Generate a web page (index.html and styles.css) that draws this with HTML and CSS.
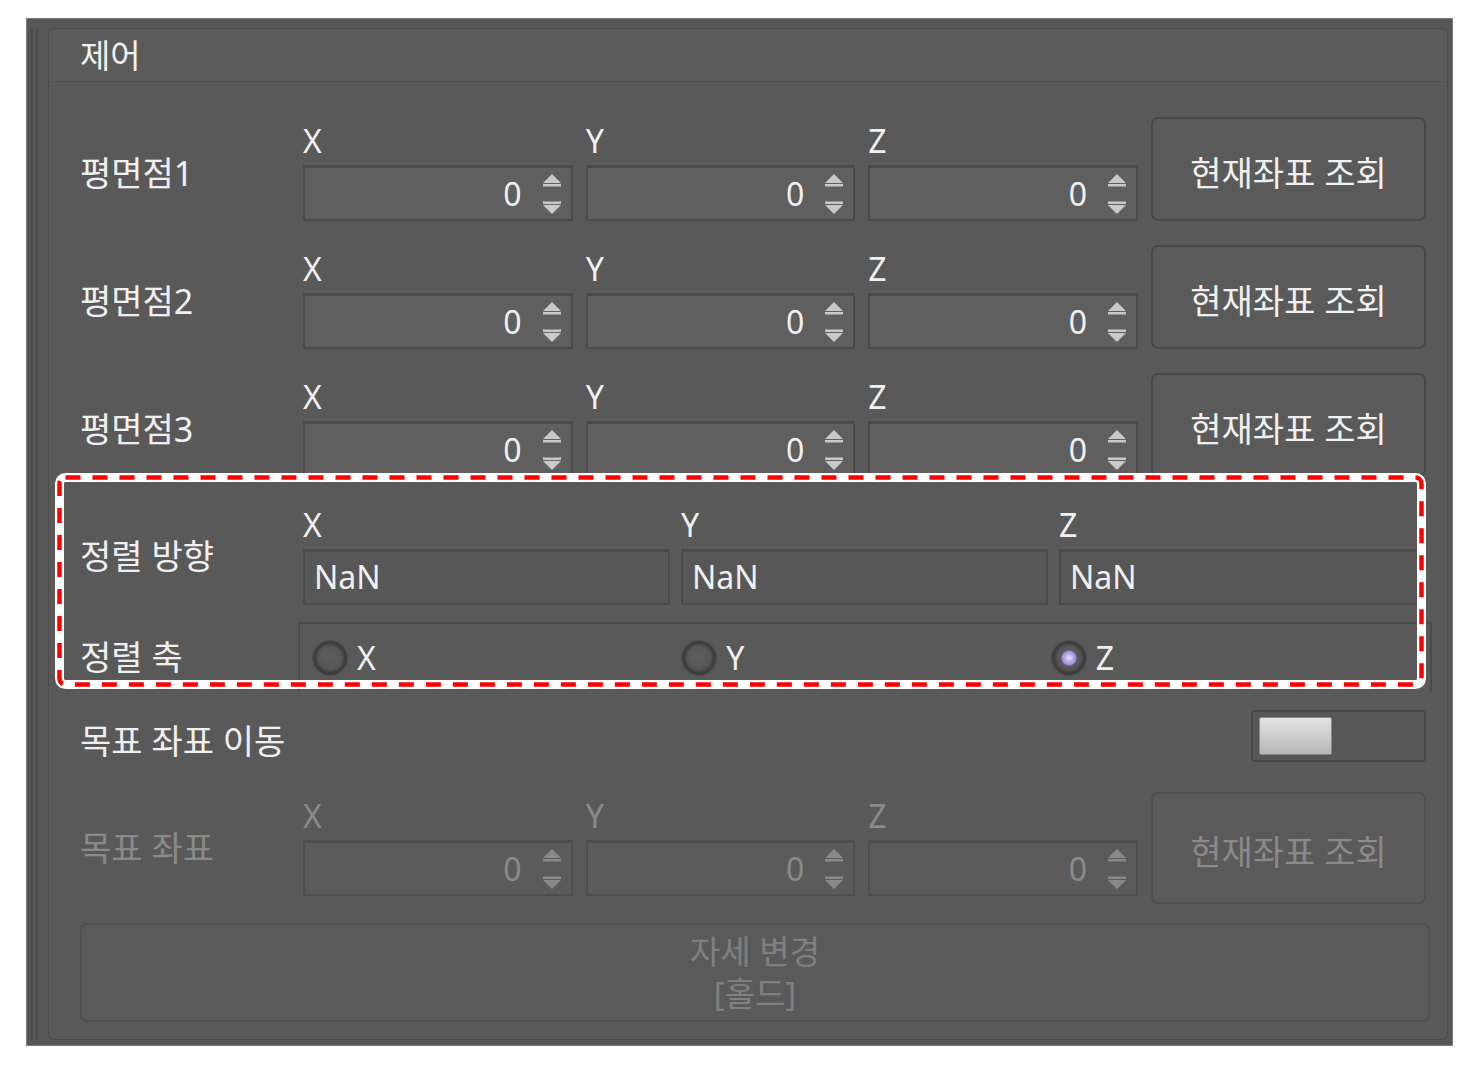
FILE: index.html
```html
<!DOCTYPE html>
<html lang="ko">
<head>
  <meta charset="utf-8">
  <title>제어</title>
  <link rel="stylesheet" href="styles.css">
</head>
<body>
  <div class="window">
    <div class="rail"></div>
    <section class="group">
      <header class="group-head">제어</header>
      <div class="group-body">

        <div class="point-row">
          <span class="row-label">평면점1</span>
          <span class="axis">X</span>
          <span class="axis">Y</span>
          <span class="axis">Z</span>
          <button class="btn">현재좌표 조회</button>
          <div class="spin"><span>0</span><svg class="arrows" viewBox="0 0 18 40"><path d="M9 0L18 9H0Z M0 10h18v2.5H0Z M0 27.5h18V30H0Z M0 31h18L9 40Z"/></svg></div>
          <div class="spin"><span>0</span><svg class="arrows" viewBox="0 0 18 40"><path d="M9 0L18 9H0Z M0 10h18v2.5H0Z M0 27.5h18V30H0Z M0 31h18L9 40Z"/></svg></div>
          <div class="spin"><span>0</span><svg class="arrows" viewBox="0 0 18 40"><path d="M9 0L18 9H0Z M0 10h18v2.5H0Z M0 27.5h18V30H0Z M0 31h18L9 40Z"/></svg></div>
        </div>

        <div class="point-row">
          <span class="row-label">평면점2</span>
          <span class="axis">X</span>
          <span class="axis">Y</span>
          <span class="axis">Z</span>
          <button class="btn">현재좌표 조회</button>
          <div class="spin"><span>0</span><svg class="arrows" viewBox="0 0 18 40"><path d="M9 0L18 9H0Z M0 10h18v2.5H0Z M0 27.5h18V30H0Z M0 31h18L9 40Z"/></svg></div>
          <div class="spin"><span>0</span><svg class="arrows" viewBox="0 0 18 40"><path d="M9 0L18 9H0Z M0 10h18v2.5H0Z M0 27.5h18V30H0Z M0 31h18L9 40Z"/></svg></div>
          <div class="spin"><span>0</span><svg class="arrows" viewBox="0 0 18 40"><path d="M9 0L18 9H0Z M0 10h18v2.5H0Z M0 27.5h18V30H0Z M0 31h18L9 40Z"/></svg></div>
        </div>

        <div class="point-row">
          <span class="row-label">평면점3</span>
          <span class="axis">X</span>
          <span class="axis">Y</span>
          <span class="axis">Z</span>
          <button class="btn">현재좌표 조회</button>
          <div class="spin"><span>0</span><svg class="arrows" viewBox="0 0 18 40"><path d="M9 0L18 9H0Z M0 10h18v2.5H0Z M0 27.5h18V30H0Z M0 31h18L9 40Z"/></svg></div>
          <div class="spin"><span>0</span><svg class="arrows" viewBox="0 0 18 40"><path d="M9 0L18 9H0Z M0 10h18v2.5H0Z M0 27.5h18V30H0Z M0 31h18L9 40Z"/></svg></div>
          <div class="spin"><span>0</span><svg class="arrows" viewBox="0 0 18 40"><path d="M9 0L18 9H0Z M0 10h18v2.5H0Z M0 27.5h18V30H0Z M0 31h18L9 40Z"/></svg></div>
        </div>

        <div class="align-row">
          <span class="row-label">정렬 방향</span>
          <span class="axis">X</span>
          <span class="axis">Y</span>
          <span class="axis">Z</span>
          <div class="text-box">NaN</div>
          <div class="text-box">NaN</div>
          <div class="text-box">NaN</div>
        </div>

        <div class="radio-row">
          <span class="row-label">정렬 축</span>
          <div class="radio-box">
            <label class="radio"><span class="dot"></span>X</label>
            <label class="radio"><span class="dot"></span>Y</label>
            <label class="radio on"><span class="dot"></span>Z</label>
          </div>
        </div>

        <div class="toggle-row">
          <span class="row-label">목표 좌표 이동</span>
          <div class="toggle"><span class="thumb"></span></div>
        </div>

        <div class="point-row off">
          <span class="row-label">목표 좌표</span>
          <span class="axis">X</span>
          <span class="axis">Y</span>
          <span class="axis">Z</span>
          <button class="btn" disabled>현재좌표 조회</button>
          <div class="spin"><span>0</span><svg class="arrows" viewBox="0 0 18 40"><path d="M9 0L18 9H0Z M0 10h18v2.5H0Z M0 27.5h18V30H0Z M0 31h18L9 40Z"/></svg></div>
          <div class="spin"><span>0</span><svg class="arrows" viewBox="0 0 18 40"><path d="M9 0L18 9H0Z M0 10h18v2.5H0Z M0 27.5h18V30H0Z M0 31h18L9 40Z"/></svg></div>
          <div class="spin"><span>0</span><svg class="arrows" viewBox="0 0 18 40"><path d="M9 0L18 9H0Z M0 10h18v2.5H0Z M0 27.5h18V30H0Z M0 31h18L9 40Z"/></svg></div>
        </div>

        <button class="hold" disabled>자세 변경<br>[홀드]</button>
      </div>
    </section>

    <!-- annotation box over the alignment rows -->
    <svg class="callout" width="1371" height="216" viewBox="0 0 1371 216">
      <rect x="4.5" y="4.5" width="1362" height="207" rx="6" fill="none" stroke="#fff" stroke-width="9"/>
      <rect x="4.5" y="4.5" width="1362" height="207" rx="6" fill="none" stroke="#f00" stroke-width="4.5" stroke-dasharray="15 12"/>
    </svg>
  </div>
</body>
</html>
```

FILE: styles.css
```css
* {
  box-sizing: border-box;
}
html,
body {
  margin: 0;
  padding: 0;
}
body {
  background: #fff;
  font-family: "Noto Sans", "Noto Sans CJK KR", sans-serif;
  color: #f0f0f0;
}
.window {
  position: relative;
  display: flex;
  width: 1427px;
  height: 1028px;
  margin: 18px 0 0 26px;
  padding: 9px 4px 5px 0;
  border: 1px solid #7b7b7b;
  background: #575757;
}
.rail {
  width: 7px;
  margin: 0 10px 0 4px;
  border-left: 2px solid #4b4b4b;
  border-right: 2px solid #4b4b4b;
}
.group {
  flex: 1;
  display: flex;
  flex-direction: column;
  border: 1px solid #4c4c4c;
  border-radius: 6px;
  background: #595959;
}
.group-head {
  height: 53px;
  padding: 2px 0 0 31px;
  font-size: 33px;
  line-height: 50px;
  background: #5b5b5b;
  border-bottom: 1px solid #525252;
  border-radius: 6px 6px 0 0;
}
.group-body {
  display: flex;
  flex-direction: column;
  padding: 35px 21px 0 31px;
}
.row-label {
  font-size: 34px;
  line-height: 44px;
  white-space: nowrap;
}
.axis {
  font-size: 32px;
  line-height: 48px;
}

/* coordinate rows */
.point-row {
  display: grid;
  grid-template-columns: 210px repeat(3, 1fr) 275px;
  grid-template-rows: 48px 56px;
  column-gap: 13px;
  margin-bottom: 24px;
}
.point-row .row-label {
  grid-column: 1;
  grid-row: 1 / 3;
  align-self: center;
  padding-top: 8px;
}
.spin {
  display: flex;
  align-items: center;
  justify-content: flex-end;
  gap: 21px;
  padding-right: 10px;
  border: 2px solid #4a4a4a;
  border-top-width: 3px;
  background: #5f5f5f;
  font-size: 32px;
}
.arrows {
  width: 18px;
  height: 40px;
  fill: #c9c9c9;
}
.btn {
  grid-column: 5;
  grid-row: 1 / 3;
  padding-top: 6px;
  font-family: inherit;
  font-size: 34px;
  color: #f0f0f0;
  background: #5a5a5a;
  border: 2px solid #474747;
  border-radius: 7px;
}
.point-row.off {
  margin: 30px 0 0;
}
.off .row-label,
.off .axis,
.off .spin,
.off .btn {
  color: #8a8a8a;
}
.off .arrows {
  fill: #8a8a8a;
}
.off .spin {
  background: #5b5b5b;
  border-color: #4e4e4e;
}
.off .btn {
  margin-bottom: -8px;
  border-color: #505050;
}

/* alignment */
.align-row {
  display: grid;
  grid-template-columns: 212px repeat(3, 1fr);
  grid-template-rows: 48px 56px;
  column-gap: 11px;
}
.align-row .row-label {
  grid-column: 1;
  grid-row: 1 / 3;
  align-self: center;
  padding-top: 6px;
}
.text-box {
  padding-left: 9px;
  border: 2px solid #4a4a4a;
  border-top-width: 3px;
  background: #575757;
  font-size: 32px;
  line-height: 50px;
}
.radio-row {
  display: grid;
  grid-template-columns: 212px 1fr;
  column-gap: 11px;
  align-items: center;
  margin-top: 17px;
}
.radio-box {
  display: grid;
  grid-template-columns: repeat(3, 1fr);
  align-items: center;
  height: 70px;
  margin: 0 -6px 0 -5px;
  padding: 0 9px 0 13px;
  border: 2px solid #4b4b4b;
  border-bottom: 0;
}
.radio {
  display: flex;
  align-items: center;
  gap: 10px;
  font-size: 32px;
  line-height: 40px;
}
.dot {
  width: 34px;
  height: 34px;
  border-radius: 50%;
  border: 3px solid #3e3e3e;
  background: radial-gradient(circle at 50% 45%, #5e5e5e 0, #585858 50%, #474747 100%);
  box-shadow: 0 0 2px #3a3a3a, inset 0 0 3px #3c3c3c;
}
.radio.on .dot {
  background:
    radial-gradient(circle at 50% 50%, #f2edff 0, #c6b6f2 3px, #9f8ad6 7px, rgba(0, 0, 0, 0) 8px),
    radial-gradient(circle at 50% 45%, #5e5e5e 0, #585858 50%, #474747 100%);
}

/* toggle */
.toggle-row {
  display: flex;
  justify-content: space-between;
  align-items: center;
  height: 52px;
  margin-top: 18px;
}
.toggle-row .row-label {
  padding-top: 10px;
}
.toggle {
  width: 175px;
  height: 52px;
  padding: 5px 6px;
  border: 2px solid #474747;
  border-radius: 4px;
  background: #575757;
}
.thumb {
  display: block;
  width: 73px;
  height: 38px;
  border: 1px solid #8a8a8a;
  border-radius: 2px;
  background: linear-gradient(#e4e4e4, #b6b6b6);
}

/* hold button */
.hold {
  height: 99px;
  margin: 27px -4px 0 0;
  font-family: inherit;
  font-size: 33px;
  line-height: 42px;
  color: #808080;
  background: #5a5a5a;
  border: 2px solid #4f4f4f;
  border-radius: 7px;
}

.callout {
  position: absolute;
  left: 28px;
  top: 454px;
}
```
